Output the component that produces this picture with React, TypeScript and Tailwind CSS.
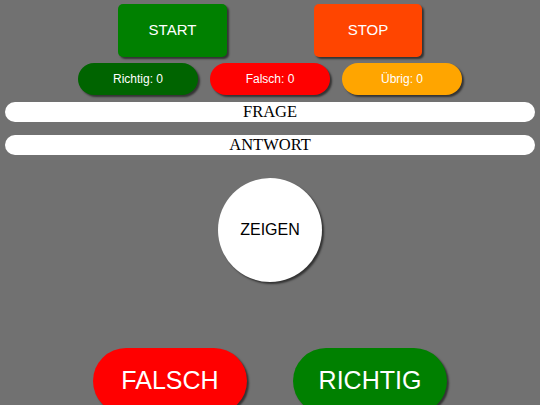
const shadow = "shadow-[2px_2px_2px_rgba(0,0,0,0.55)]";

const counters = [
  { label: "Richtig: 0", bg: "bg-[#006400]" },
  { label: "Falsch: 0", bg: "bg-[#ff0000]" },
  { label: "Übrig: 0", bg: "bg-[#ffa500]" },
];

export default function App() {
  return (
    <div className="w-[540px] h-[405px] overflow-hidden bg-[#717171] flex flex-col items-center pt-[4px] font-['Liberation_Sans',Arial,sans-serif]">
      {/* start / stop */}
      <div className="flex shrink-0 gap-[87px]">
        <button className={`w-[109px] h-[53px] rounded-[5px] bg-[#008000] text-white text-[15px] ${shadow}`}>
          START
        </button>
        <button className={`w-[108px] h-[53px] rounded-[5px] bg-[#ff4500] text-white text-[15px] ${shadow}`}>
          STOP
        </button>
      </div>

      {/* counters */}
      <div className="flex shrink-0 gap-[12px] mt-[6px]">
        {counters.map((c) => (
          <div
            key={c.label}
            className={`w-[120px] h-[32px] rounded-full ${c.bg} text-white text-[12px] flex items-center justify-center ${shadow}`}
          >
            {c.label}
          </div>
        ))}
      </div>

      {/* question / answer */}
      <div className="w-[530px] h-[20px] shrink-0 mt-[7px] rounded-full bg-white flex items-center justify-center text-[16.5px] text-black font-['Liberation_Serif','Times_New_Roman',serif] leading-none">
        FRAGE
      </div>
      <div className="w-[530px] h-[20px] shrink-0 mt-[13px] rounded-full bg-white flex items-center justify-center text-[16.5px] text-black font-['Liberation_Serif','Times_New_Roman',serif] leading-none">
        ANTWORT
      </div>

      {/* show */}
      <button className={`w-[104px] h-[104px] shrink-0 mt-[23px] rounded-full bg-white text-black text-[16px] ${shadow}`}>
        ZEIGEN
      </button>

      {/* answer buttons */}
      <div className="flex shrink-0 gap-[46px] mt-[66px]">
        <button className={`w-[154px] h-[66px] rounded-full bg-[#ff0000] text-white text-[25px] ${shadow}`}>
          FALSCH
        </button>
        <button className={`w-[154px] h-[66px] rounded-full bg-[#008000] text-white text-[25px] ${shadow}`}>
          RICHTIG
        </button>
      </div>
    </div>
  );
}
